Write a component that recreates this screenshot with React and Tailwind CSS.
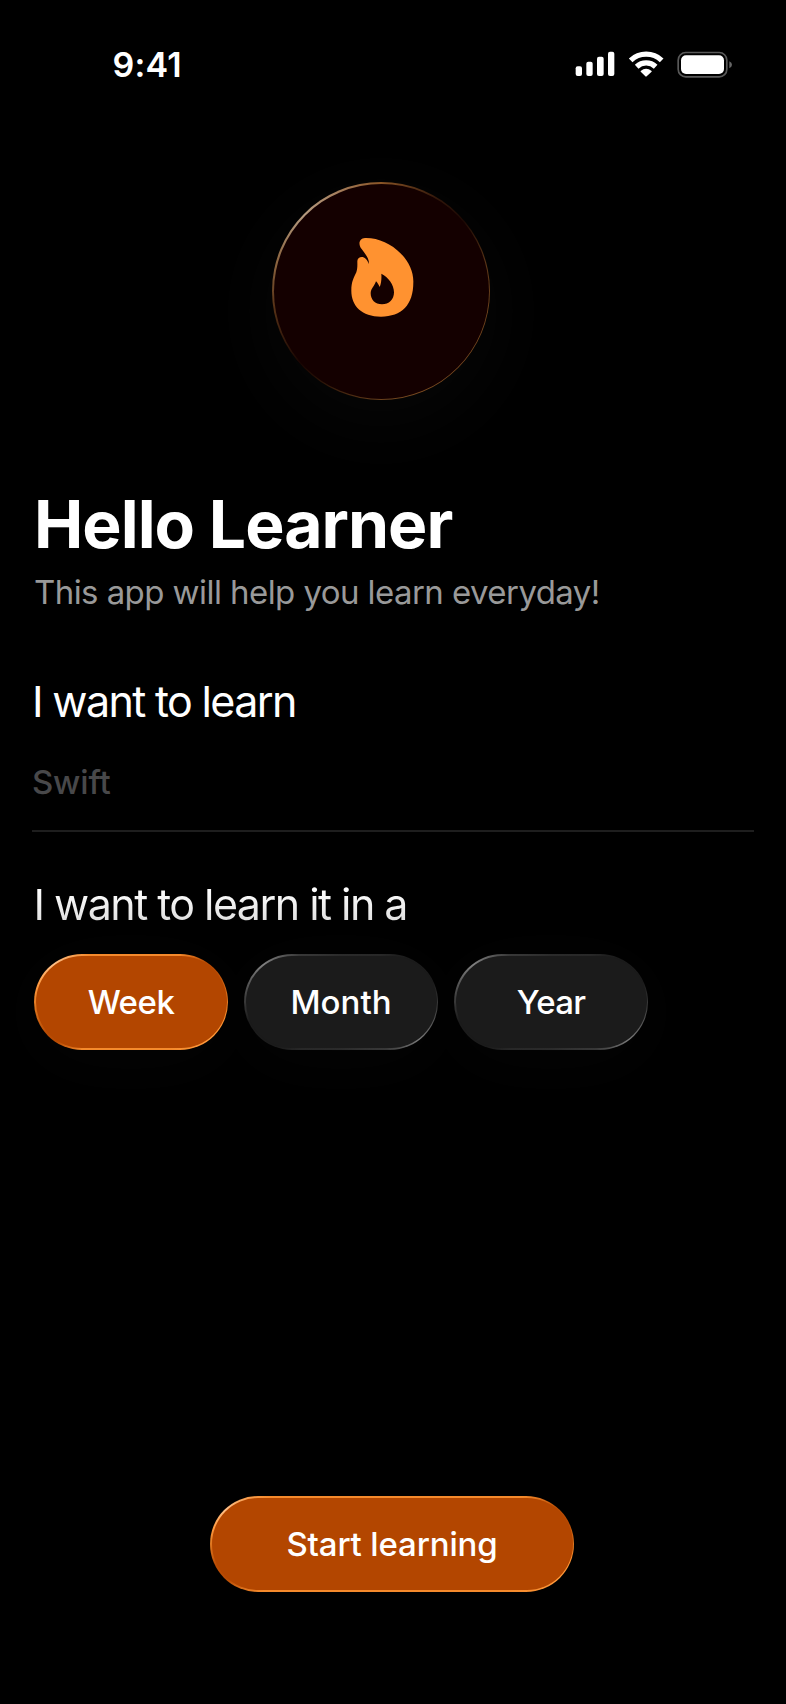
const FONT = 'font-[Inter,"Liberation_Sans",sans-serif]';

const RIMS = {
  orange:
    'bg-[conic-gradient(from_0deg,#f58a2c_0deg,#f58a2c_46deg,#b84b03_62deg,#b84b03_70deg,#e07820_88deg,#ff9230_100deg,#ff9a3c_116deg,#f58a2c_140deg,#f58a2c_226deg,#b84b03_242deg,#b84b03_250deg,#e07820_268deg,#ff9a40_280deg,#ffc088_296deg,#f58a2c_318deg,#f58a2c_360deg)]',
  orangeWide:
    'bg-[conic-gradient(from_0deg,#f58a2c_0deg,#f58a2c_70deg,#b84b03_78deg,#b84b03_83deg,#e07820_90deg,#ff9230_95deg,#ff9a3c_102deg,#f58a2c_112deg,#f58a2c_250deg,#b84b03_258deg,#b84b03_263deg,#e07820_270deg,#ff9a40_275deg,#ffc088_282deg,#f58a2c_291deg,#f58a2c_360deg)]',
  gray:
    'bg-[conic-gradient(from_0deg,#2b2b2b_0deg,#282828_40deg,#1b1b1b_56deg,#1b1b1b_78deg,#3c3c3c_92deg,#787878_116deg,#383838_136deg,#2b2b2b_180deg,#282828_220deg,#1b1b1b_236deg,#1b1b1b_258deg,#3c3c3c_272deg,#808080_296deg,#383838_318deg,#2b2b2b_360deg)]',
};

const FILLS = {
  orange: 'bg-[#b34600]',
  orangeWide: 'bg-[#b34600]',
  gray: 'bg-[#1b1b1b]',
};

function Pill({ label, tone = 'gray', width = 'w-[194px]', tracking, glow = true }) {
  return (
    <button
      type="button"
      className={`${width} h-[96px] shrink-0 rounded-full px-[1.500px] py-[2px] ${RIMS[tone]} ${
        glow ? 'shadow-[0_10px_70px_rgba(255,255,255,0.02)]' : ''
      }`}
    >
      <span
        className={`flex h-full w-full items-center justify-center rounded-full text-[33px] font-medium leading-[40px] text-white ${tracking} ${FILLS[tone]}`}
      >
        {label}
      </span>
    </button>
  );
}

function StatusBar() {
  return (
    <header className="flex h-[128px] items-center justify-between pl-[112.500px] pr-[53px]">
      <span className="mt-[1px] text-[34px] font-semibold leading-[40px] tracking-[0.200px]">9:41</span>
      <svg width="158" height="28" viewBox="45 46 474 84" fill="#fff" aria-hidden="true">
        <rect x="47" y="95" width="19" height="29" rx="6" />
        <rect x="79" y="81" width="19" height="43" rx="6" />
        <rect x="111" y="66" width="20" height="58" rx="6" />
        <rect x="144" y="51" width="19" height="73" rx="6" />
        <g fill="none" stroke="#fff" strokeWidth="16">
          <path d="M212 77 A68 68 0 0 1 305 77" />
          <path d="M230 96 A42 42 0 0 1 287 96" />
        </g>
        <path d="M242 109 Q258 95 275 109 Q276 111 274 112 L260 125 Q258 127 256 125 L243 112 Q241 111 242 109Z" />
        <rect x="354.500" y="53.500" width="146" height="73" rx="23" fill="none" stroke="#595959" strokeWidth="5" />
        <path d="M508 80 Q516 84 516 90.500 Q516 97 508 101Z" fill="#666" />
        <rect x="363" y="62" width="129" height="56" rx="15" />
      </svg>
    </header>
  );
}

function Flame() {
  return (
    <svg width="66" height="81" viewBox="39 36 198 243" aria-hidden="true">
      <path
        fill="#ff9230"
        fillRule="evenodd"
        d="M90 39 C130 38 168 56 198 86 C222 110 236 142 235 172 C235 240 200 275 138 275 C80 275 48 242 49 195 C49 172 56 158 64 142 C68 130 67 118 67 108 C68 95 84 93 92 101 C97 106 100 112 102 117 C103 100 90 86 80 72 C68 57 73 40 90 39Z M139 146 C160 157 177 178 177 202 C177 224 162 238 141 238 C120 238 107 224 107 204 C108 190 118 184 123 169 C127 172 131 180 134 186 C139 175 140 160 139 146Z"
      />
    </svg>
  );
}

export default function App() {
  return (
    <div className={`flex h-[1704px] w-[786px] flex-col overflow-hidden bg-black text-white ${FONT}`}>
      <StatusBar />
      <main className="flex flex-1 flex-col">
        <div className="ml-[272px] mt-[54px] size-[218px] rounded-full bg-[conic-gradient(from_0deg,#8a5526_0deg,#30160a_32deg,#1c0904_50deg,#5a3517_75deg,#6e431d_100deg,#804e22_135deg,#754820_175deg,#301709_210deg,#180502_228deg,#583317_262deg,#8b643f_285deg,#b49a7f_315deg,#a78160_335deg,#8a5526_360deg)] p-[1.500px] shadow-[0_20px_90px_rgba(255,255,255,0.03)]">
          <div className="flex h-full w-full items-start justify-center rounded-full bg-[#140000] pt-[53.500px]">
            <Flame />
          </div>
        </div>

        <h1 className="ml-[34px] mt-[84px] whitespace-nowrap text-[66px] font-bold leading-[80px] tracking-[-0.950px]">
          Hello Learner
        </h1>
        <p className="ml-[34px] mt-[8px] whitespace-nowrap text-[33px] leading-[40px] tracking-[-0.570px] text-[#999999]">
          This app will help you learn everyday!
        </p>

        <label htmlFor="topic" className="ml-[32px] mt-[63px] whitespace-nowrap text-[43px] leading-[52px] tracking-[-1.650px]">
          I want to learn
        </label>
        <input
          id="topic"
          placeholder="Swift"
          className="ml-[32px] mt-[20px] h-[85px] w-[722px] border-b-2 border-[#1e1e1e] bg-transparent pb-[14px] text-[33px] font-medium leading-[40px] tracking-[-0.200px] outline-none placeholder:text-[#48484a]"
        />

        <h2 className="ml-[33.500px] mt-[46px] w-fit whitespace-nowrap bg-gradient-to-b from-white from-20% to-[#e2e2e2] to-80% bg-clip-text text-[43px] font-normal leading-[52px] tracking-[-1.550px] text-transparent">
          I want to learn it in a
        </h2>
        <div className="ml-[34px] mt-[24px] flex gap-[16px]">
          <Pill label="Week" tone="orange" tracking="tracking-[-0.5px]" />
          <Pill label="Month" tracking="tracking-[0px]" />
          <Pill label="Year" tracking="tracking-[-0.7px]" />
        </div>

        <div className="ml-[210px] mt-auto pb-[112px]">
          <Pill
            label="Start learning"
            tone="orangeWide"
            width="w-[364px]"
            tracking="tracking-[-0.150px]"
            glow={false}
          />
        </div>
      </main>
    </div>
  );
}
